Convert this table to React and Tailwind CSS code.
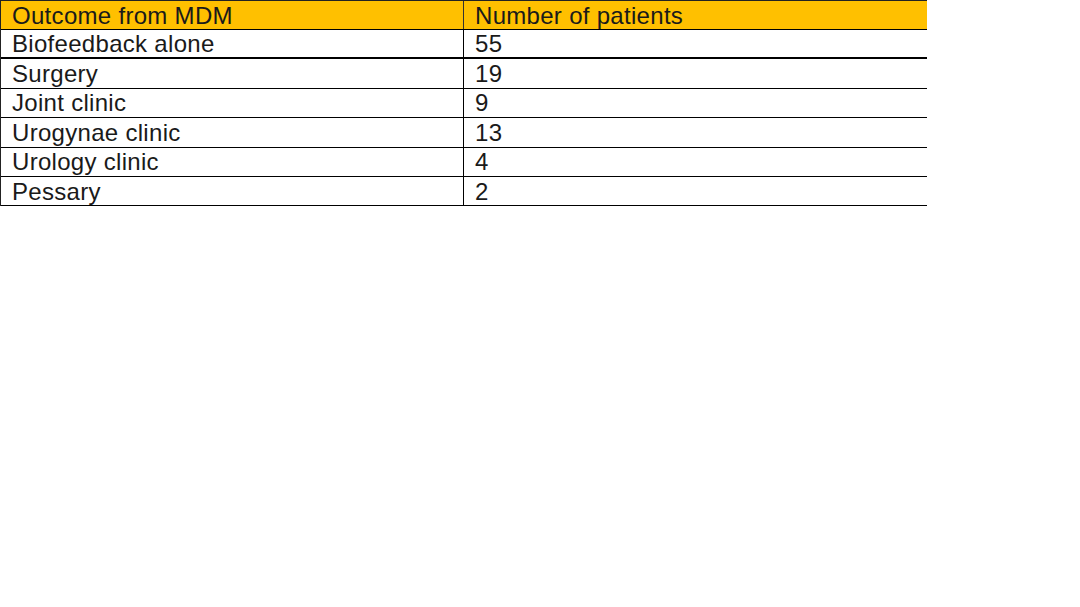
export default function App() {
  const rows = [
    ["Biofeedback alone", "55"],
    ["Surgery", "19"],
    ["Joint clinic", "9"],
    ["Urogynae clinic", "13"],
    ["Urology clinic", "4"],
    ["Pessary", "2"],
  ];
  return (
    <div className="w-[1080px] h-[607px] bg-white" style={{ fontFamily: '"Liberation Sans", Arial, sans-serif' }}>
      <div className="w-[927px] border-l border-t border-[#222]">
        <div className="flex h-[29px] bg-[#ffc000] border-b border-black text-[24px] tracking-[0.3px] leading-none text-[#1a1a1a]">
          <div className="w-[463px] border-r border-[#333] pl-[11px] pt-[1px] flex items-center">Outcome from MDM</div>
          <div className="flex-1 pl-[11px] pt-[1px] flex items-center">Number of patients</div>
        </div>
        {rows.map((r, i) => (
          <div
            key={i}
            className={`flex h-[29.4px] ${i === 0 ? "border-b-2" : "border-b"} border-black text-[24px] tracking-[0.3px] leading-none text-[#1a1a1a]`}
          >
            <div className="w-[463px] border-r border-black pl-[11px] pt-[1px] flex items-center">{r[0]}</div>
            <div className="flex-1 pl-[11px] pt-[1px] flex items-center">{r[1]}</div>
          </div>
        ))}
      </div>
    </div>
  );
}
